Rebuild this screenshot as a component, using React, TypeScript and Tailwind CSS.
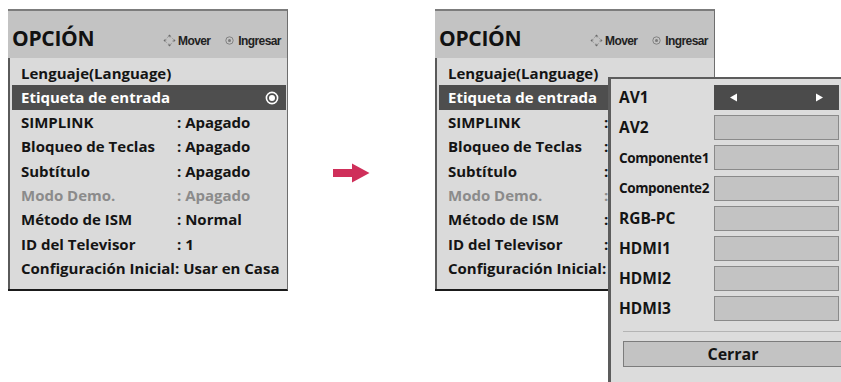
const rows: { label: string; value?: string; dim?: boolean; selected?: boolean }[] = [
  { label: "Lenguaje(Language)" },
  { label: "Etiqueta de entrada", selected: true },
  { label: "SIMPLINK", value: ": Apagado" },
  { label: "Bloqueo de Teclas", value: ": Apagado" },
  { label: "Subtítulo", value: ": Apagado" },
  { label: "Modo Demo.", value: ": Apagado", dim: true },
  { label: "Método de ISM", value: ": Normal" },
  { label: "ID del Televisor", value: ": 1" },
  { label: "Configuración Inicial", value: ": Usar en Casa" },
];

const inputs = ["AV1", "AV2", "Componente1", "Componente2", "RGB-PC", "HDMI1", "HDMI2", "HDMI3"];

function MoveIcon() {
  return (
    <svg width="13" height="13" viewBox="0 0 13 13" className="shrink-0">
      <circle cx="6.5" cy="6.5" r="3.6" fill="none" stroke="#9a9a9a" strokeWidth="1" strokeDasharray="1.5 1.2" />
      <path d="M6.5 0.5 L8.3 2.4 H4.7 Z" fill="#6a6a6a" />
      <path d="M6.5 12.5 L8.3 10.6 H4.7 Z" fill="#6a6a6a" />
      <path d="M0.5 6.5 L2.4 4.7 V8.3 Z" fill="#6a6a6a" />
      <path d="M12.5 6.5 L10.6 4.7 V8.3 Z" fill="#6a6a6a" />
    </svg>
  );
}

function EnterIcon() {
  return (
    <svg width="9" height="9" viewBox="0 0 9 9" className="shrink-0">
      <circle cx="4.5" cy="4.5" r="3.7" fill="none" stroke="#7a7a7a" strokeWidth="0.9" />
      <circle cx="4.5" cy="4.5" r="1.5" fill="#7a7a7a" />
    </svg>
  );
}

function OptionPanel({ showValues }: { showValues: boolean }) {
  return (
    <div className="w-[280px] h-[282px] flex flex-col border-t-2 border-t-[#7c7c7c] border-r border-r-[#6e6e6e] border-b-2 border-b-[#1a1a1a] bg-[#dadada]">
      {/* Header */}
      <div className="h-[47px] bg-[#c3c3c3] flex items-center pl-[4px] pt-[8px] overflow-hidden">
        <span className="text-[21px] font-bold text-[#111] tracking-[-0.3px] w-[151px] shrink-0">OPCIÓN</span>
        <div className="flex items-center gap-[2px] mt-[4px] font-['Liberation_Sans',Arial,sans-serif] text-[12px] font-bold text-[#222] whitespace-nowrap">
          <MoveIcon />
          <span className="tracking-[-0.6px]">Mover</span>
          <span className="w-[11px]" />
          <EnterIcon />
          <span className="tracking-[-0.6px] ml-[2px]">Ingresar</span>
        </div>
      </div>

      {/* Rows */}
      <div className="flex-1 border-l-2 border-l-[#5a5a5a] pt-[3px] pl-[2px]">
        {rows.map((r) =>
          r.selected ? (
            <div key={r.label} className="h-[24.4px] w-[274px] bg-[#4e4e4e] flex items-center pl-[9px] pr-[7px] text-white">
              <span className="flex-1">{r.label}</span>
              {showValues && (
                <svg width="14" height="14" viewBox="0 0 14 14">
                  <circle cx="7" cy="7" r="5.6" fill="none" stroke="#fff" strokeWidth="1.6" />
                  <circle cx="7" cy="7" r="3" fill="#fff" />
                </svg>
              )}
            </div>
          ) : (
            <div
              key={r.label}
              className={`h-[24.4px] flex items-center pl-[9px] whitespace-nowrap ${r.dim ? "text-[#8b8b8b]" : "text-[#141414]"}`}
            >
              {r.value ? (
                <>
                  <span className={r.label === "Configuración Inicial" ? "" : "w-[156px] shrink-0"}>{r.label}</span>
                  {showValues ? <span>{r.value}</span> : <span>:</span>}
                </>
              ) : (
                <span>{r.label}</span>
              )}
            </div>
          )
        )}
      </div>
    </div>
  );
}

export default function App() {
  return (
    <div className="w-[841px] h-[382px] bg-white overflow-hidden relative font-['Open_Sans','Noto_Sans',sans-serif] text-[15px] font-bold">
      <div className="flex pl-[8px] pt-[9px]">
        <OptionPanel showValues />

        {/* Arrow */}
        <div className="w-[147px] flex items-start">
          <svg width="37" height="20" viewBox="0 0 37 20" className="ml-[45px] mt-[154px]">
            <path d="M0 6 H19 V0.5 L36.5 10 L19 19.5 V14 H0 Z" fill="#cf2f5a" />
          </svg>
        </div>

        <div className="relative">
          <OptionPanel showValues={false} />

          {/* Input label popup */}
          <div className="absolute left-[173px] top-[68px] w-[240px] h-[320px] bg-[#dcdcdc] border-l-[3px] border-t-2 border-[#5c5c5c] pt-[6px] pl-[8px]">
            <div className="flex flex-col gap-[5.2px]">
              {inputs.map((name, i) => (
                <div key={name} className="flex items-center h-[25px]">
                  <span
                    className={`w-[95px] shrink-0 whitespace-nowrap text-[#141414] ${
                      name.startsWith("Componente") ? "text-[13.5px] tracking-[-0.4px]" : "text-[15.5px]"
                    }`}
                  >
                    {name}
                  </span>
                  {i === 0 ? (
                    <div className="w-[125px] h-[25px] bg-[#4b4b4b] flex items-center justify-between px-[15px] text-white">
                      <svg width="9" height="9" viewBox="0 0 9 9"><path d="M1 4.5 L8 0.5 V8.5 Z" fill="#fff" /></svg>
                      <svg width="9" height="9" viewBox="0 0 9 9"><path d="M8 4.5 L1 0.5 V8.5 Z" fill="#fff" /></svg>
                    </div>
                  ) : (
                    <div className="w-[125px] h-[25px] bg-[#c3c3c3] border border-[#8a8a8a]" />
                  )}
                </div>
              ))}
            </div>
            <div className="mt-[10px] ml-[4px] border-t border-[#b4b4b4]" />
            <div className="mt-[9px] ml-[4px] w-[220px] h-[26px] bg-[#c3c3c3] border border-[#7c7c7c] flex items-center justify-center text-[16px] text-[#141414]">
              Cerrar
            </div>
          </div>
        </div>
      </div>
    </div>
  );
}
